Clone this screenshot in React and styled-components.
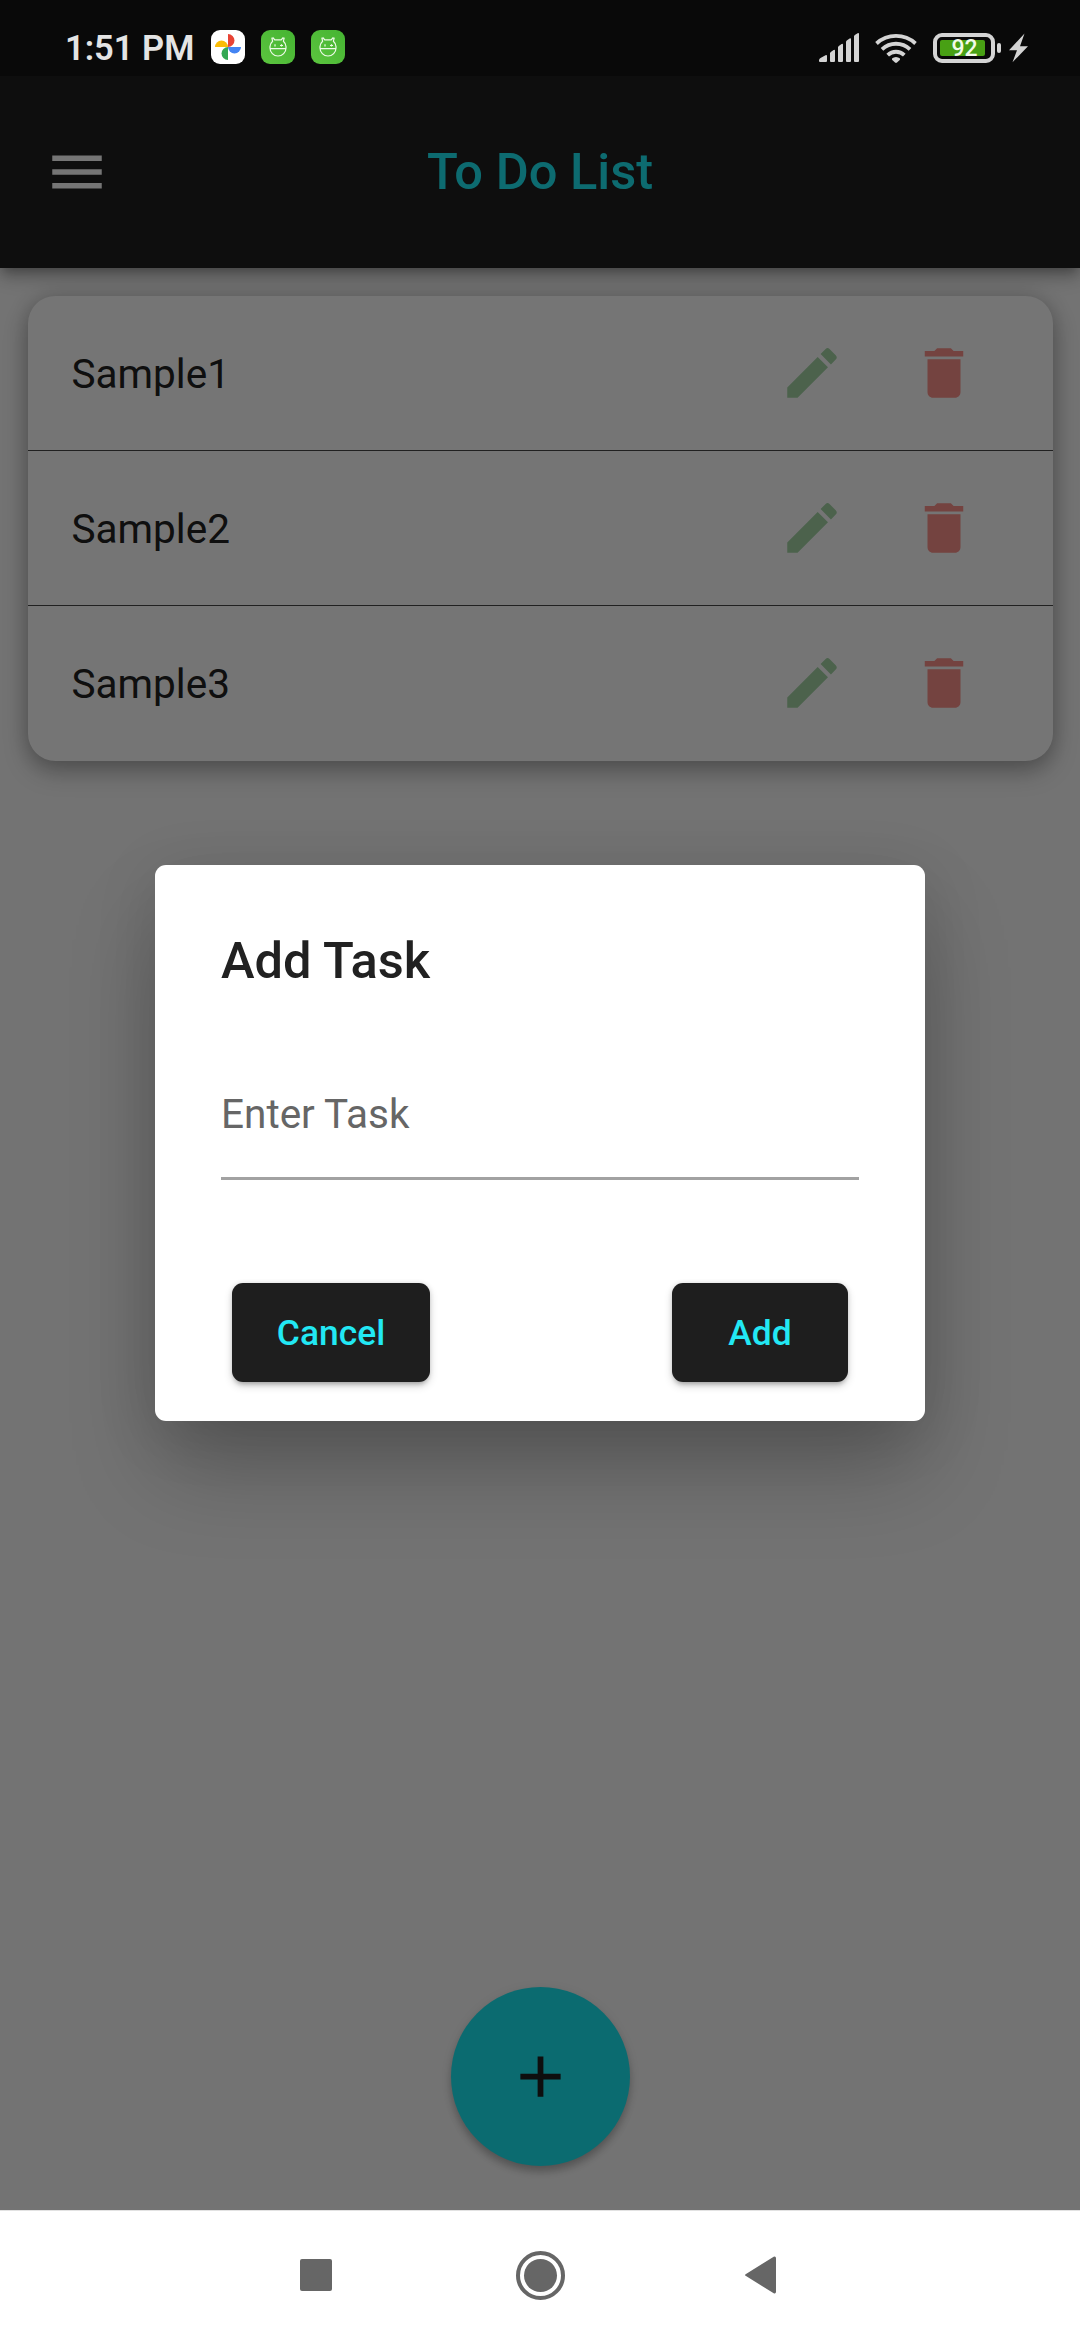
import React from "react";
import styled, { createGlobalStyle } from "styled-components";

const GlobalStyle = createGlobalStyle`
  * { box-sizing: border-box; }
  body { margin: 0; background: #fafafa; }
  button { border: 0; padding: 0; margin: 0; background: none; font: inherit; color: inherit; }
`;

const Screen = styled.div`
  position: relative;
  display: flex;
  flex-direction: column;
  width: 1080px;
  height: 2340px;
  overflow: hidden;
  background: #fafafa;
  font-family: Roboto, "Noto Sans", sans-serif;
  color: #212121;
`;

const AppShell = styled.div`
  flex: 1;
  display: flex;
  flex-direction: column;
  min-height: 0;
`;

const AppBar = styled.header`
  display: grid;
  grid-template-columns: 66px 1fr 66px;
  align-items: center;
  height: 268px;
  flex: none;
  padding: 76px 44px 0;
  background: #1f1f1f;
  color: #fff;
  box-shadow: 0 5px 11px -3px rgba(0, 0, 0, 0.3), 0 11px 14px rgba(0, 0, 0, 0.14),
    0 3px 27px rgba(0, 0, 0, 0.12);
  z-index: 1;
`;

const AppTitle = styled.h1`
  margin: 0;
  text-align: center;
  font-size: 50.6px;
  line-height: 60px;
  font-weight: 500;
  color: #1ee9f5;
`;

const Glyph = styled.svg`
  display: block;
  width: ${(p) => p.$size || 66}px;
  height: ${(p) => p.$size || 66}px;
  fill: currentColor;
`;

const Body = styled.main`
  flex: 1;
  display: flex;
  flex-direction: column;
  justify-content: space-between;
  padding: 28px 27.5px 44px;
`;

const TaskCard = styled.section`
  height: 465px;
  border-radius: 27.5px;
  background: #fff;
  box-shadow: 0 11px 24px rgba(0, 0, 0, 0.26), 0 0 22px rgba(0, 0, 0, 0.16);
`;

const TaskRow = styled.div`
  display: flex;
  align-items: center;
  height: 155px;
  padding: 0 76px 0 44px;
  border-bottom: 1px solid ${(p) => (p.$last ? "transparent" : "#484848")};
`;

const TaskName = styled.span`
  flex: 1;
  padding-top: 2px;
  font-size: 40.5px;
  line-height: 48px;
`;

const TaskAction = styled.button`
  color: ${(p) => p.$color};
  margin-left: ${(p) => p.$gap || 0}px;
`;

const Fab = styled.button`
  display: grid;
  place-items: center;
  align-self: center;
  width: 179px;
  height: 179px;
  border-radius: 50%;
  background: #1ae9f3;
  color: #1f1f1f;
  box-shadow: 0 6px 10px -2px rgba(0, 0, 0, 0.18), 0 6px 8px rgba(0, 0, 0, 0.1),
    0 2px 12px rgba(0, 0, 0, 0.08);
`;

const Scrim = styled.div`
  position: absolute;
  inset: 0 0 130px;
  z-index: 2;
  display: grid;
  place-items: center;
  padding-top: 76px;
  background: rgba(0, 0, 0, 0.54);
`;

const Dialog = styled.section`
  display: flex;
  flex-direction: column;
  width: 770px;
  height: 556px;
  padding: 66px 66px 39px;
  border-radius: 11px;
  background: #fff;
  box-shadow: 0 52px 90px -8px rgba(0, 0, 0, 0.25), 0 10px 64px rgba(0, 0, 0, 0.11);
`;

const DialogTitle = styled.h2`
  margin: 0;
  font-size: 50.6px;
  line-height: 60px;
  font-weight: 500;
`;

const TaskField = styled.div`
  height: 126px;
  margin-top: 63px;
  padding-top: 36px;
  border-bottom: 3px solid #a2a2a2;
  font-size: 40.5px;
  line-height: 48px;
  color: #666;
`;

const DialogActions = styled.div`
  display: flex;
  justify-content: space-between;
  margin-top: auto;
  padding: 0 11px;
`;

const DialogButton = styled.button`
  width: ${(p) => p.$width}px;
  height: 99px;
  border-radius: 11px;
  background: #1e1e1e;
  color: #22e8f4;
  font-size: 35.4px;
  font-weight: 500;
  line-height: 42px;
  box-shadow: 0 5px 5px -3px rgba(0, 0, 0, 0.22), 0 4px 8px rgba(0, 0, 0, 0.16),
    0 0 5px rgba(0, 0, 0, 0.1);
`;

const StatusBar = styled.div`
  position: absolute;
  inset: 0 0 auto;
  z-index: 3;
  display: flex;
  align-items: flex-start;
  justify-content: space-between;
  height: 76px;
  padding: 30px 52px 0 65px;
  background: rgba(0, 0, 0, 0.3);
  color: #e4e4e4;
`;

const StatusGroup = styled.div`
  display: flex;
  align-items: center;
  gap: 16px;
`;

const Clock = styled.span`
  width: 130px;
  margin: 1px 0 -1px;
  font-size: 34.5px;
  line-height: 34px;
  font-weight: 600;
  white-space: nowrap;
`;

const AppBadge = styled.span`
  display: grid;
  place-items: center;
  width: 34px;
  height: 34px;
  border-radius: 9px;
  background: ${(p) => p.$bg};
`;

const SignalRow = styled.div`
  display: flex;
  align-items: center;
  height: 30px;
  margin-top: 3px;
  color: #d4d4d4;
`;

const SignalIcon = styled.svg`
  display: block;
  fill: currentColor;
  margin-right: ${(p) => p.$after || 0}px;
`;

const Battery = styled.div`
  display: flex;
  align-items: center;
  width: 62px;
  height: 30px;
  padding: 3px;
  border: 4px solid currentColor;
  border-radius: 9px;
`;

const BatteryLevel = styled.div`
  display: flex;
  align-items: center;
  justify-content: center;
  width: 45px;
  height: 16px;
  padding: 2px 0 0 4px;
  border-radius: 2px;
  background: #48a014;
  color: #f2fbe9;
  font-size: 23px;
  font-weight: 500;
  line-height: 16px;
`;

const BatteryTip = styled.span`
  width: 4px;
  height: 10px;
  margin: 0 8px 0 2px;
  border-radius: 2px;
  background: currentColor;
`;

const NavBar = styled.nav`
  display: flex;
  align-items: center;
  height: 130px;
  flex: none;
  padding: 0 0 1px 300px;
  background: #fff;
  border-top: 1px solid #e2e2e2;
  color: #666;
`;

const RecentKey = styled.button`
  width: 32px;
  height: 32px;
  border-radius: 2px;
  background: #666;
  margin-right: 184px;
`;

const HomeKey = styled.button`
  display: grid;
  place-items: center;
  width: 49px;
  height: 49px;
  margin-right: 180px;
  border: 4px solid #666;
  border-radius: 50%;

  &::before {
    content: "";
    width: 33px;
    height: 33px;
    border-radius: 50%;
    background: #666;
  }
`;

const PhotosLogo = () => (
  <svg width="26" height="26" viewBox="0 0 26 26">
    <path d="M13 0a6.5 6.5 0 0 1 0 13z" fill="#e84335" />
    <path d="M26 13a6.5 6.5 0 0 1-13 0z" fill="#4384f3" />
    <path d="M13 26a6.5 6.5 0 0 1 0-13z" fill="#34a853" />
    <path d="M0 13a6.5 6.5 0 0 1 13 0z" fill="#fbbc05" />
  </svg>
);

const RobotLogo = () => (
  <svg width="18" height="20" viewBox="0 0 18 20" fill="none" stroke="#effbe9" strokeWidth="1.2">
    <path d="M3.6 4.2 2.9 1.2 4.2 1l1.6 1.8h6.4L13.8 1l1.3.2-.7 3C16.400 6 17 7.600 17 9.500v1.500a8 8 0 0 1-16 0V9.500C1 7.600 1.600 6 3.600 4.200zM1 11.700h16" />
    <path d="M6 7.300v2.200M11 8.500h3M12.500 7.300v2.200" />
  </svg>
);

const tasks = ["Sample1", "Sample2", "Sample3"];

export default function App() {
  return (
    <Screen>
      <GlobalStyle />
      <AppShell>
        <AppBar>
          <Glyph viewBox="0 0 24 24">
            <path d="M3 18h18v-2H3v2zm0-5h18v-2H3v2zm0-7v2h18V6H3z" />
          </Glyph>
          <AppTitle>To Do List</AppTitle>
        </AppBar>
        <Body>
          <TaskCard>
            {tasks.map((name, i) => (
              <TaskRow key={name} $last={i === tasks.length - 1}>
                <TaskName>{name}</TaskName>
                <TaskAction $color="#a5d6a7">
                  <Glyph viewBox="0 0 24 24">
                    <path d="M3 17.250V21h3.750L17.810 9.940l-3.750-3.750L3 17.250zM20.710 7.040c.39-.39.39-1.020 0-1.410l-2.340-2.340a.9959.9959 0 0 0-1.410 0l-1.830 1.830 3.750 3.750 1.830-1.830z" />
                  </Glyph>
                </TaskAction>
                <TaskAction $color="#fc928b" $gap={66}>
                  <Glyph viewBox="0 0 24 24">
                    <path d="M6 19c0 1.100.9 2 2 2h8c1.100 0 2-.9 2-2V7H6v12zM19 4h-3.500l-1-1h-5l-1 1H5v2h14V4z" />
                  </Glyph>
                </TaskAction>
              </TaskRow>
            ))}
          </TaskCard>
          <Fab>
            <Glyph $size={69} viewBox="0 0 24 24">
              <path d="M19 13h-6v6h-2v-6H5v-2h6V5h2v6h6v2z" />
            </Glyph>
          </Fab>
        </Body>
      </AppShell>

      <NavBar>
        <RecentKey />
        <HomeKey />
        <svg width="31" height="38" viewBox="0 0 31 38" fill="currentColor">
          <path d="M.6 18.200 28.700.7Q31 0 31 2.200v33.600q0 2.200-2.300 1.500L.6 19.800q-1.200-.8 0-1.600z" />
        </svg>
      </NavBar>

      <Scrim>
        <Dialog>
          <DialogTitle>Add Task</DialogTitle>
          <TaskField>Enter Task</TaskField>
          <DialogActions>
            <DialogButton $width={198}>Cancel</DialogButton>
            <DialogButton $width={176}>Add</DialogButton>
          </DialogActions>
        </Dialog>
      </Scrim>

      <StatusBar>
        <StatusGroup>
          <Clock>1:51 PM</Clock>
          <AppBadge $bg="#fff"><PhotosLogo /></AppBadge>
          <AppBadge $bg="linear-gradient(45deg, #5cc43f, #45b432)"><RobotLogo /></AppBadge>
          <AppBadge $bg="linear-gradient(45deg, #5cc43f, #45b432)"><RobotLogo /></AppBadge>
        </StatusGroup>
        <SignalRow>
          <SignalIcon $after={16} width="40" height="30" viewBox="0 0 40 30">
            <path d="M0 27.500Q0 25.800 1.500 25L6.500 22.300Q8 21.700 8 23V28q0 1-1 1H1q-1 0-1-1zM11 20.500q0-1 .8-1.500l2.800-2q1.400-.7 1.400.7V28q0 1-1 1h-3q-1 0-1-1zM19 14.500q0-1 .8-1.500l2.800-2q1.400-.7 1.400.7V28q0 1-1 1h-3q-1 0-1-1zM27 9q0-1 .8-1.500l2.800-2q1.400-.7 1.400.7V28q0 1-1 1h-3q-1 0-1-1zM35 3.500q0-1 .8-1.500L38.600.3Q40-.3 40 1V28q0 1-1 1h-3q-1 0-1-1z" />
          </SignalIcon>
          <SignalIcon $after={16} width="42" height="30" viewBox="0 0 42 30">
            <g fill="none" stroke="currentColor" strokeWidth="3.800">
              <path d="M1.500 10.500a29 29 0 0 1 39 0" />
              <path d="M7 16.300a20.500 20.500 0 0 1 28 0" />
              <path d="M12.700 22.100a12 12 0 0 1 16.600 0" />
            </g>
            <path d="M21 24q2.200 0 4 1.600v1.200L22 29.600q-1 .7-2 0l-3-2.800v-1.200Q18.800 24 21 24z" />
          </SignalIcon>
          <Battery><BatteryLevel>92</BatteryLevel></Battery>
          <BatteryTip />
          <SignalIcon width="19" height="30" viewBox="0 0 19 30">
            <path d="M15.500.5 0 17.200h8L3.500 29.300 19 13.200h-8z" />
          </SignalIcon>
        </SignalRow>
      </StatusBar>
    </Screen>
  );
}
